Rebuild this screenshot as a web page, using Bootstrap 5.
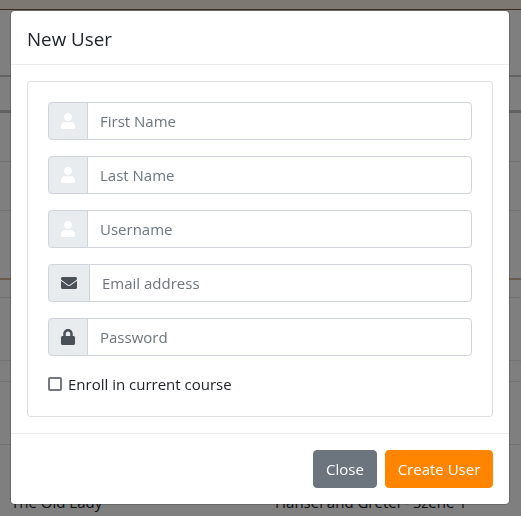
<!DOCTYPE html>
<html lang="en">
<head>
<meta charset="utf-8">
<title>New User</title>
<link href="https://cdn.jsdelivr.net/npm/bootstrap@5.3.0/dist/css/bootstrap.min.css" rel="stylesheet">
<style>
html, body { height: 516px; overflow: hidden; }
body { font-family: "Open Sans", "Noto Sans", sans-serif; font-size: 15px; line-height: 24px; color: #212529; background: #fff; }
.page-behind { height: 516px; overflow: hidden; }
.bg-top { height: 9px; background: #fdf0e4; border-bottom: 1px solid #7a5a3a; box-sizing: content-box; }
.bg-row { border-bottom: 1px solid #dee2e6; }
.r1 { height: 67px; border-bottom-width: 2px; border-bottom-color: #c4c4c4; }
.r2 { height: 36px; border-bottom-width: 3px; border-bottom-color: #c4c4c4; }
.r3, .r4 { height: 49px; }
.r5 { height: 69px; border-bottom: 2px solid #d6b89c; }
.r6 { height: 18px; }
.r7 { height: 63px; }
.r8 { height: 21px; }
.r9 { height: 63px; }
.r10 { padding: 45px 11px 0; }
.r10-name { width: 264px; }
.modal.shown { display: block; overflow: hidden; }
.modal-dialog.tight { margin: 10px 11px 10px 10px; max-width: none; }
.modal-header.slim { padding: 13px 16px 10px; border-bottom-color: #e9ecef; }
.modal-title { font-size: 18.75px; line-height: 30px; font-weight: 400; }
.modal-content { border-radius: 4.8px; }
.panel-body { padding: 20px; }
.card.panel-outer { border-radius: 4px; border-color: rgba(0, 0, 0, .125); }
.input-group > .form-control, .input-group > .input-group-text { font-size: 15px; line-height: 24px; height: 38px; padding: 6px 12px; border-color: #ced4da; }
.input-group > .input-group-text { background: #e9ecef; }
.input-group > :first-child { border-radius: 4px 0 0 4px; }
.input-group > :last-child { border-radius: 0 4px 4px 0; }
.form-control::placeholder { color: #6c757d; }
.ic { display: block; height: 16px; }
.ic-14 { width: 14px; }
.ic-16 { width: 16px; }
.ic-light { fill: #fff; }
.ic-dark { fill: #495057; }
.enroll { height: 24px; }
.form-check-input[type=checkbox].enroll-box { width: 14px; height: 14px; margin: 0 6px 0 0; border: 2px solid #767682; border-radius: 2px; float: none; flex: none; }
.modal-footer.footer-wide { padding: 16px; gap: 8px; border-top-color: #e9ecef; }
.footer-wide .btn { margin: 0; font-size: 15px; padding: 6px 0; border-radius: 4px; height: 38px; line-height: 24px; }
.btn.btn-orange { background: #ff8500; border-color: #ff8500; color: #fff; width: 108px; }
.btn.btn-slate { background: #6c757d; border-color: #6c757d; color: #fff; width: 64px; }
</style>
</head>
<body>
<div class="page-behind">
  <div class="bg-top"></div>
  <div class="bg-row r1"></div>
  <div class="bg-row r2"></div>
  <div class="bg-row r3"></div>
  <div class="bg-row r4"></div>
  <div class="bg-row r5"></div>
  <div class="bg-row r6"></div>
  <div class="bg-row r7"></div>
  <div class="bg-row r8"></div>
  <div class="bg-row r9"></div>
  <div class="r10 d-flex"><span class="r10-name">The Old Lady</span><span>Hansel and Gretel - Szene 1</span></div>
</div>
<div class="modal-backdrop show"></div>
<div class="modal shown" tabindex="-1">
  <div class="modal-dialog tight">
    <div class="modal-content">
      <div class="modal-header slim">
        <h5 class="modal-title">New User</h5>
      </div>
      <div class="modal-body">
        <div class="card panel-outer">
          <div class="card-body panel-body">
            <div class="input-group mb-3">
              <span class="input-group-text"><svg class="ic ic-14 ic-light" viewBox="0 0 448 512"><path d="M224 256c70.7 0 128-57.3 128-128S294.7 0 224 0 96 57.3 96 128s57.3 128 128 128zm89.6 32h-16.7c-22.2 10.2-46.9 16-72.9 16s-50.6-5.8-72.9-16h-16.7C60.2 288 0 348.2 0 422.4V464c0 26.5 21.5 48 48 48h352c26.5 0 48-21.5 48-48v-41.6c0-74.2-60.2-134.4-134.4-134.4z"/></svg></span>
              <input type="text" class="form-control" placeholder="First Name">
            </div>
            <div class="input-group mb-3">
              <span class="input-group-text"><svg class="ic ic-14 ic-light" viewBox="0 0 448 512"><path d="M224 256c70.7 0 128-57.3 128-128S294.7 0 224 0 96 57.3 96 128s57.3 128 128 128zm89.6 32h-16.7c-22.2 10.2-46.9 16-72.9 16s-50.6-5.8-72.9-16h-16.7C60.2 288 0 348.2 0 422.4V464c0 26.5 21.5 48 48 48h352c26.5 0 48-21.5 48-48v-41.6c0-74.2-60.2-134.4-134.4-134.4z"/></svg></span>
              <input type="text" class="form-control" placeholder="Last Name">
            </div>
            <div class="input-group mb-3">
              <span class="input-group-text"><svg class="ic ic-14 ic-light" viewBox="0 0 448 512"><path d="M224 256c70.7 0 128-57.3 128-128S294.7 0 224 0 96 57.3 96 128s57.3 128 128 128zm89.6 32h-16.7c-22.2 10.2-46.9 16-72.9 16s-50.6-5.8-72.9-16h-16.7C60.2 288 0 348.2 0 422.4V464c0 26.5 21.5 48 48 48h352c26.5 0 48-21.5 48-48v-41.6c0-74.2-60.2-134.4-134.4-134.4z"/></svg></span>
              <input type="text" class="form-control" placeholder="Username">
            </div>
            <div class="input-group mb-3">
              <span class="input-group-text"><svg class="ic ic-16 ic-dark" viewBox="0 0 512 512"><path d="M502.3 190.8c3.9-3.1 9.7-.2 9.7 4.7V400c0 26.5-21.5 48-48 48H48c-26.5 0-48-21.5-48-48V195.6c0-5 5.7-7.8 9.7-4.7 22.4 17.4 52.1 39.5 154.1 113.6 21.1 15.4 56.7 47.8 92.2 47.6 35.7.3 72-32.8 92.3-47.6 102-74.1 131.6-96.3 154-113.7zM256 320c23.2.4 56.6-29.2 73.4-41.4 132.7-96.3 142.8-104.7 173.4-128.7 5.8-4.5 9.2-11.5 9.2-18.9v-19c0-26.5-21.5-48-48-48H48C21.5 64 0 85.5 0 112v19c0 7.4 3.4 14.3 9.2 18.9 30.6 23.9 40.7 32.4 173.4 128.7 16.8 12.2 50.2 41.8 73.4 41.4z"/></svg></span>
              <input type="email" class="form-control" placeholder="Email address">
            </div>
            <div class="input-group mb-3">
              <span class="input-group-text"><svg class="ic ic-14 ic-dark" viewBox="0 0 448 512"><path d="M400 224h-24v-72C376 68.2 307.8 0 224 0S72 68.2 72 152v72H48c-26.5 0-48 21.5-48 48v192c0 26.5 21.5 48 48 48h352c26.5 0 48-21.5 48-48V272c0-26.5-21.5-48-48-48zm-104 0H152v-72c0-39.7 32.3-72 72-72s72 32.3 72 72v72z"/></svg></span>
              <input type="password" class="form-control" placeholder="Password">
            </div>
            <div class="d-flex align-items-center enroll">
              <input type="checkbox" class="form-check-input enroll-box" id="enroll">
              <label for="enroll">Enroll in current course</label>
            </div>
          </div>
        </div>
      </div>
      <div class="modal-footer footer-wide">
        <button type="button" class="btn btn-slate">Close</button>
        <button type="button" class="btn btn-orange">Create User</button>
      </div>
    </div>
  </div>
</div>
<script src="https://cdn.jsdelivr.net/npm/bootstrap@5.3.0/dist/js/bootstrap.bundle.min.js"></script>
</body>
</html>
